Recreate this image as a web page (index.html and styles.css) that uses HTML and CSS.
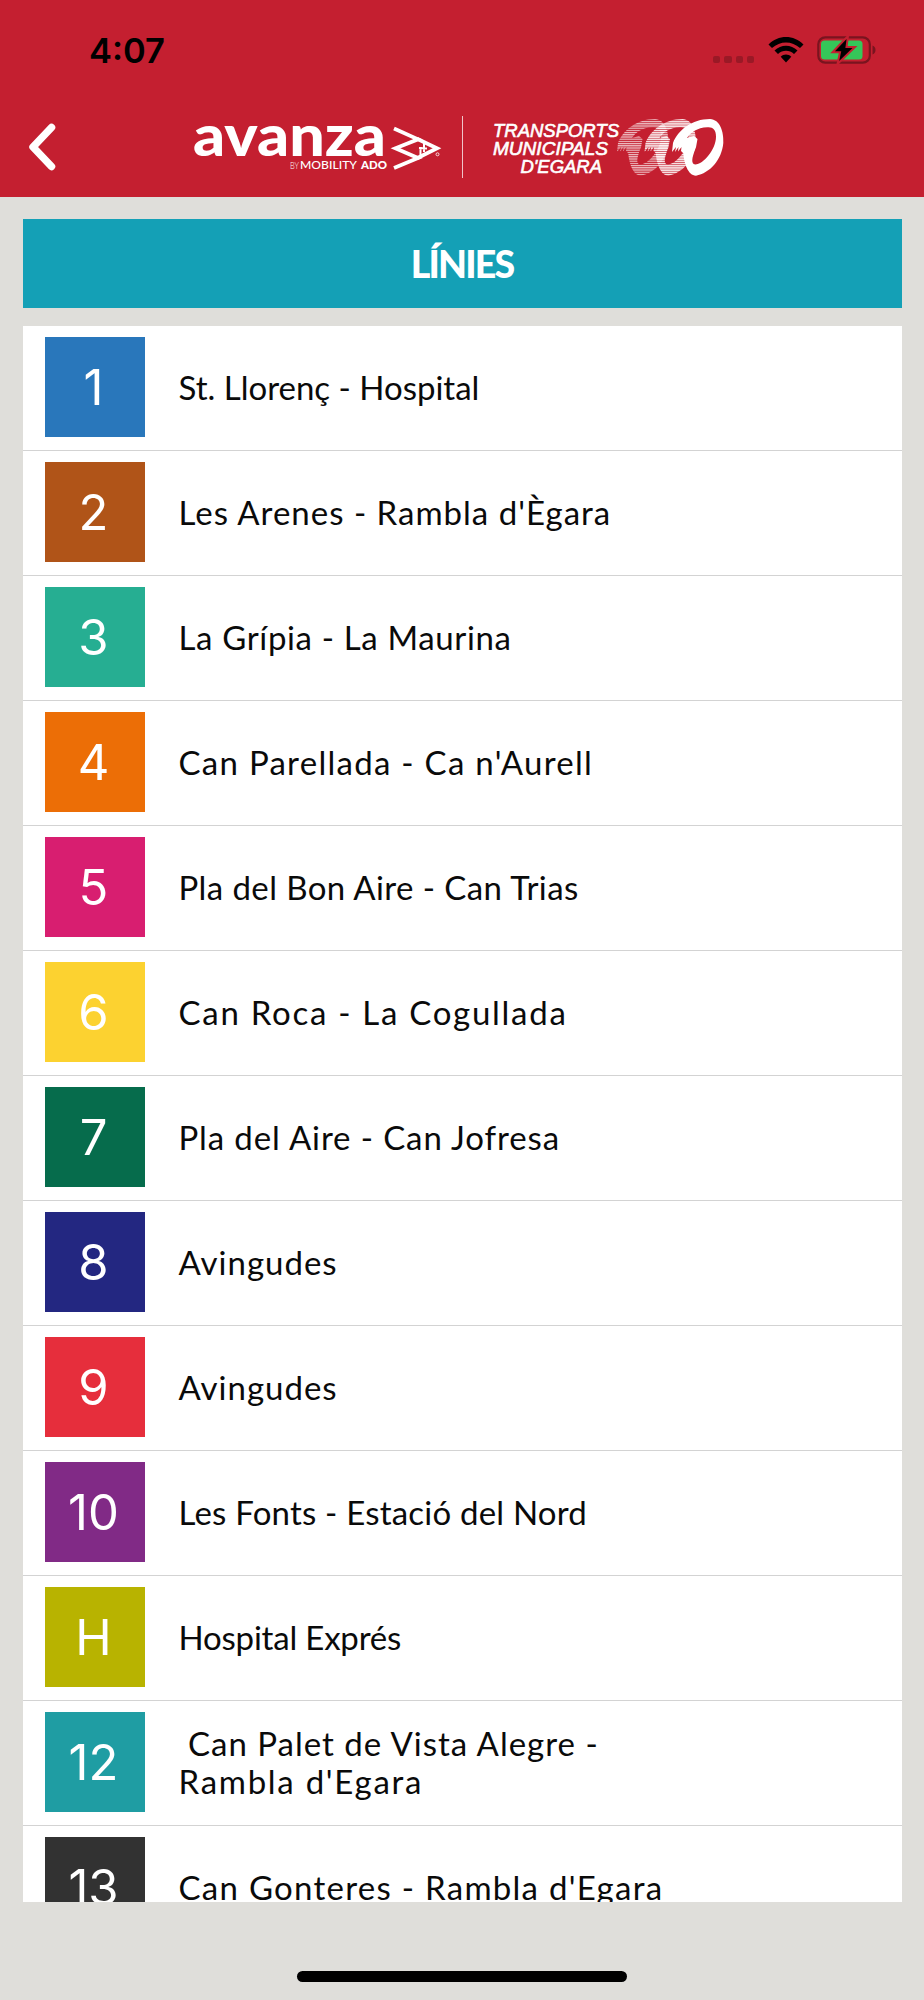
FILE: index.html
```
<!DOCTYPE html>
<html lang="ca">
<head>
    <meta charset="UTF-8">
    <meta name="viewport" content="width=device-width, initial-scale=1.0">
    <title>Línies</title>
    <link rel="stylesheet" href="styles.css">
</head>
<body>

<header class="header">
    <div class="status-bar">
        <span class="time">4:07</span>
        <div class="status-icons">
            <div class="dots"><i></i><i></i><i></i><i></i></div>
            <svg class="wifi" width="36" height="28" viewBox="0 0 36 28">
                <path d="M0.5 8.5 C10 -1.5 26 -1.5 35.500 8.500 L32 12 C24 4.500 12 4.500 4 12 Z"/>
                <path d="M6.500 14.500 C13 8 23 8 29.500 14.500 L26 18 C21.500 13.800 14.500 13.800 10 18 Z"/>
                <path d="M12.700 20.700 C15.500 17.900 20.500 17.900 23.300 20.700 L18 26.500 Z"/>
            </svg>
            <svg class="battery" width="60" height="28" viewBox="0 0 60 28">
                <rect x="1.300" y="1.300" width="51.500" height="25.400" rx="7" fill="none" stroke="#7a141f" stroke-width="2.200"/>
                <path d="M55.500 9.500 C59.500 11 59.500 17 55.500 18.500 Z" fill="#7a141f"/>
                <rect x="4" y="4.500" width="41.500" height="19" rx="3.500" fill="#35c759"/>
                <path d="M31 0 L15.500 16.300 H23 L20.500 28 L38 11 H29.500 Z" fill="#000" stroke="#c41f30" stroke-width="2"/>
            </svg>
        </div>
    </div>
    <nav class="nav-bar">
        <svg class="back" width="28" height="48" viewBox="0 0 28 48">
            <path d="M23.500 4.500 L5 24 L23.500 43.500"/>
        </svg>
        <svg class="avanza" width="250" height="62" viewBox="190 116 250 62">
            <text class="avanza-name" x="193" y="155.500" textLength="193" lengthAdjust="spacingAndGlyphs">avanza</text>
            <text class="by" x="290" y="169" textLength="9" lengthAdjust="spacingAndGlyphs">BY</text>
            <text class="mobility" x="300" y="169" textLength="57" lengthAdjust="spacingAndGlyphs">MOBILITY</text>
            <text class="ado" x="361" y="169" textLength="26" lengthAdjust="spacingAndGlyphs">ADO</text>
            <path class="arrow" d="M394 128.500 L418 139.300 L395.500 148.300 L418 158 L394 168"/>
            <path class="arrow" d="M417 138.800 L437 148.300 L417 158.200"/>
            <path class="arrow-bar" d="M420.500 147 V155 M424 143 V152 M419 148 L427 148.500"/>
            <circle cx="437.500" cy="154.300" r="1.500" fill="none" stroke="#fff" stroke-width="0.800"/>
        </svg>
        <div class="divider"></div>
        <svg class="egara" width="232" height="62" viewBox="493 116 232 62">
            <defs>
                <pattern id="thin" width="4" height="2.200" patternUnits="userSpaceOnUse">
                    <rect width="4" height="1.200" fill="#fff" opacity="0.720"/>
                </pattern>
                <pattern id="thick" width="4" height="2.200" patternUnits="userSpaceOnUse">
                    <rect width="4" height="1.650" fill="#fff" opacity="0.850"/>
                </pattern>
                <path id="ring" fill-rule="evenodd" d="M63 33 C68 20 82 9 100 9 C110 9.300 114 22 113.300 33 C111.700 50 100 63 86 65.700 C78 65.700 74 53 73.300 43.300 L71 41 L71.500 37 L68 41.500 L68.500 37 L65 42 L66 37 L62 42 Z M98.700 17.300 C88 16.700 80 23 77 28 L84 26 L87.500 29 L86 37.300 C83 45 80.500 52 84 54.300 C92 56 106 40 106 26.700 C106 20 103 17.300 98.700 17.300 Z"/>
            </defs>
            <text class="tme" x="493" y="137" textLength="126" lengthAdjust="spacingAndGlyphs">TRANSPORTS</text>
            <text class="tme" x="493" y="155" textLength="115" lengthAdjust="spacingAndGlyphs">MUNICIPALS</text>
            <text class="tme" x="520.500" y="173" textLength="81.500" lengthAdjust="spacingAndGlyphs">D'EGARA</text>
            <use href="#ring" x="555" y="110" fill="url(#thin)"/>
            <use href="#ring" x="582.500" y="110" fill="url(#thick)"/>
            <use href="#ring" x="610" y="110" fill="#fff"/>
        </svg>
    </nav>
</header>

<main class="content">
    <h1 class="title">LÍNIES</h1>

    <ul class="lines">
        <li><span class="badge blue">1</span><span class="name">St. Llorenç - Hospital</span></li>
        <li><span class="badge brown">2</span><span class="name wide">Les Arenes - Rambla d'Ègara</span></li>
        <li><span class="badge green">3</span><span class="name medium">La Grípia - La Maurina</span></li>
        <li><span class="badge orange">4</span><span class="name wider">Can Parellada - Ca n'Aurell</span></li>
        <li><span class="badge pink">5</span><span class="name snug">Pla del Bon Aire - Can Trias</span></li>
        <li><span class="badge yellow">6</span><span class="name widest">Can Roca - La Cogullada</span></li>
        <li><span class="badge dark-green">7</span><span class="name loose">Pla del Aire - Can Jofresa</span></li>
        <li><span class="badge navy">8</span><span class="name wide">Avingudes</span></li>
        <li><span class="badge red">9</span><span class="name wide">Avingudes</span></li>
        <li><span class="badge purple">10</span><span class="name narrow">Les Fonts - Estació del Nord</span></li>
        <li><span class="badge olive">H</span><span class="name tight">Hospital Exprés</span></li>
        <li><span class="badge teal">12</span><span class="name"><span class="wide">&nbsp;Can Palet de Vista Alegre -</span><span class="widest">Rambla d'Egara</span></span></li>
        <li><span class="badge black">13</span><span class="name wider">Can Gonteres - Rambla d'Egara</span></li>
    </ul>
</main>

<div class="home-bar"></div>

</body>
</html>
```
FILE: styles.css
```
* {
    box-sizing: border-box;
}
body {
    margin: 0;
    height: 2000px;
    overflow: hidden;
    display: flex;
    flex-direction: column;
    background-color: #dfdeda;
    font-family: Lato, sans-serif;
}
.header {
    height: 197px;
    background-color: #c41f30;
}
.status-bar {
    height: 100px;
    padding: 0 47px 0 89px;
    display: flex;
    justify-content: space-between;
    align-items: center;
}
.time {
    font-family: Inter, sans-serif;
    font-size: 34.5px;
    font-weight: 600;
    color: #000;
}
.status-icons {
    display: flex;
    align-items: center;
}
.dots {
    display: flex;
    gap: 4px;
    margin: 19px 14px 0 0;
}
.dots i {
    width: 7.2px;
    height: 7.2px;
    border-radius: 2px;
    background: #9a1926;
}
.battery {
    margin-left: 13px;
}
.nav-bar {
    display: flex;
    align-items: center;
    height: 94px;
    padding-left: 28px;
}
.back path {
    fill: none;
    stroke: #fff;
    stroke-width: 7.5;
    stroke-linecap: round;
    stroke-linejoin: round;
}
.avanza {
    margin-left: 134px;
    overflow: visible;
}
.egara {
    overflow: visible;
}
.avanza text, .egara text {
    fill: #fff;
}
.avanza-name {
    font-size: 58px;
    font-weight: 900;
}
.by, .mobility, .ado {
    font-size: 11.5px;
}
.by {
    font-weight: 300;
    font-size: 10px;
}
.mobility {
    font-weight: 500;
}
.ado {
    font-weight: 900;
}
.arrow {
    fill: none;
    stroke: #fff;
    stroke-width: 3.8;
}
.arrow-bar {
    fill: none;
    stroke: #fff;
    stroke-width: 2;
}
.divider {
    width: 1px;
    height: 62px;
    margin: 0 30px 0 22px;
    background: #f0c4c9;
}
.tme {
    font-family: "Liberation Sans", Arial, sans-serif;
    font-size: 18px;
    font-style: italic;
    stroke: #fff;
    stroke-width: 0.6;
}
.content {
    padding: 22px 22.5px 0;
}
.title {
    margin: 0 0 18px;
    height: 89px;
    line-height: 90px;
    text-align: center;
    background: #14a0b6;
    color: #fff;
    font-size: 37.5px;
    font-weight: 900;
    letter-spacing: -1.8px;
}
.lines {
    list-style: none;
    margin: 0;
    padding: 0;
    height: 1576px;
    overflow: hidden;
    background: #fff;
}
.lines li {
    display: flex;
    height: 125px;
    padding: 11px 22px 0;
    border-bottom: 1px solid #d3d3d3;
}
.badge {
    width: 100px;
    height: 100px;
    padding-right: 2px;
    text-align: center;
    line-height: 101px;
    font-family: Inter, sans-serif;
    font-size: 49px;
    color: #fff;
}
.name {
    height: 100px;
    display: flex;
    flex-direction: column;
    justify-content: center;
    margin-left: 34px;
    line-height: 38px;
    font-size: 33px;
    color: #0a0a0a;
    white-space: nowrap;
}
/* tracking of the line names */
.tight { letter-spacing: -0.2px; }
.narrow { letter-spacing: 0.2px; }
.snug { letter-spacing: 0.4px; }
.medium { letter-spacing: 0.64px; }
.loose { letter-spacing: 0.88px; }
.wide { letter-spacing: 1px; }
.wider { letter-spacing: 1.27px; }
.widest { letter-spacing: 1.72px; }

.blue { background: #2977bb; }
.brown { background: #b05418; }
.green { background: #26ae92; }
.orange { background: #ec6e06; }
.pink { background: #d81e70; }
.yellow { background: #fcd230; }
.dark-green { background: #066c4c; }
.navy { background: #232781; }
.red { background: #e62e3c; }
.purple { background: #812a86; }
.olive { background: #b8b300; }
.teal { background: #1f9da3; }
.black { background: #323232; }
.home-bar {
    flex: none;
    width: 330px;
    height: 11px;
    margin: 69px auto 0;
    border-radius: 6px;
    background: #000;
}
```
